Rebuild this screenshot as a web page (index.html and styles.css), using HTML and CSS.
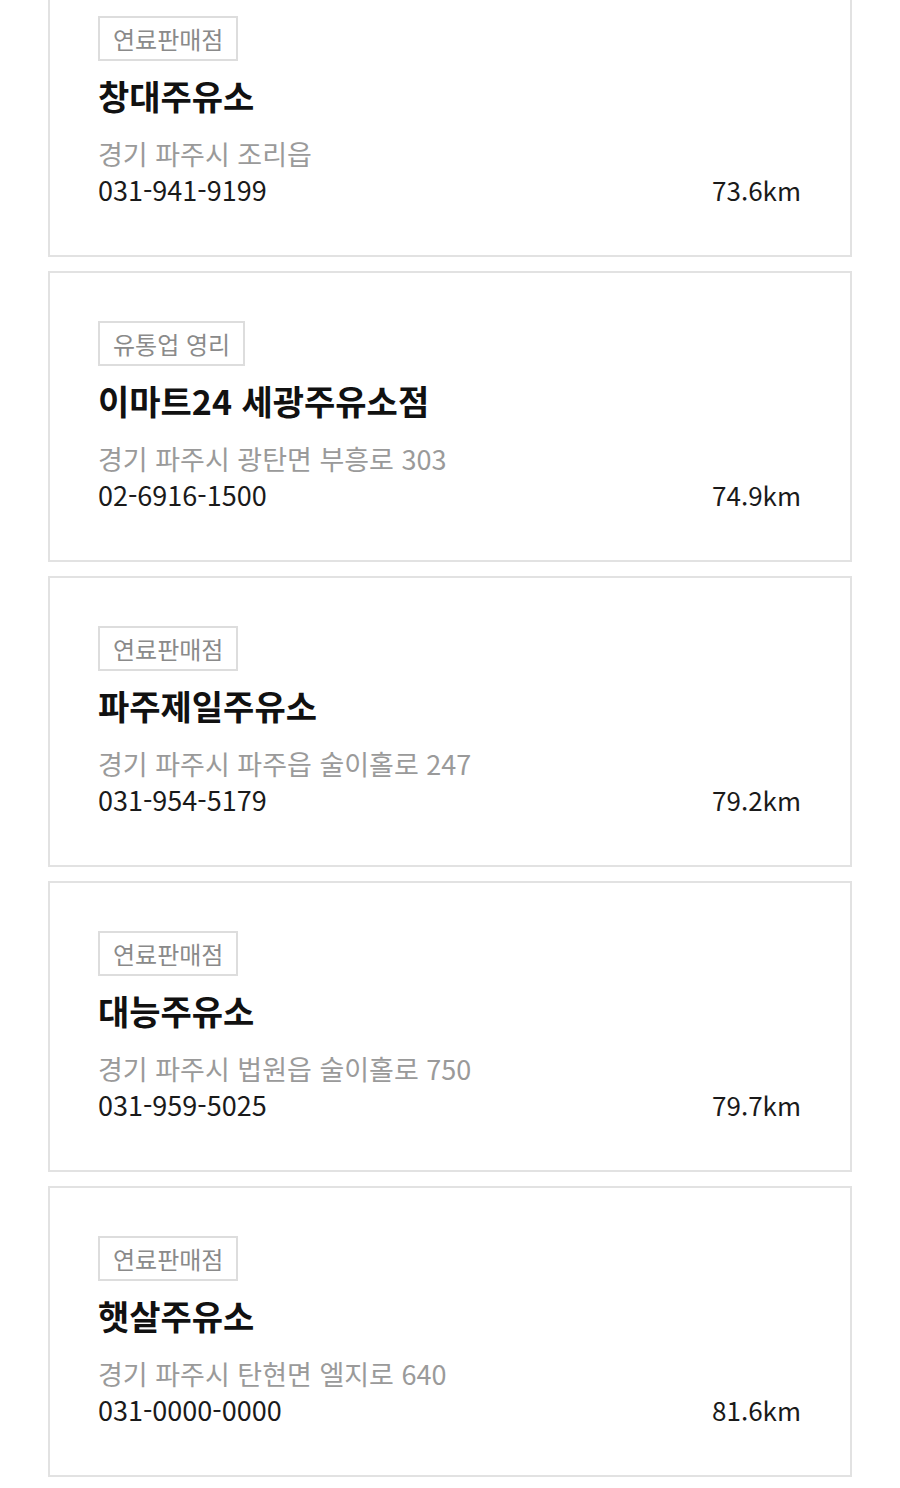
FILE: index.html
```html
<!DOCTYPE html>
<html lang="ko">
<head>
  <meta charset="UTF-8">
  <meta name="viewport" content="width=device-width, initial-scale=1.0">
  <title>주유소 목록</title>
  <link rel="stylesheet" href="styles.css">
</head>
<body>

  <div class="station-list">
    <div class="station">
      <span class="tag">연료판매점</span>
      <div class="name">창대주유소</div>
      <div class="address">경기 파주시 조리읍</div>
      <div class="bottom-row">
        <span class="phone">031-941-9199</span>
        <span class="distance">73.6km</span>
      </div>
    </div>

    <div class="station">
      <span class="tag">유통업 영리</span>
      <div class="name">이마트24 세광주유소점</div>
      <div class="address">경기 파주시 광탄면 부흥로 303</div>
      <div class="bottom-row">
        <span class="phone">02-6916-1500</span>
        <span class="distance">74.9km</span>
      </div>
    </div>

    <div class="station">
      <span class="tag">연료판매점</span>
      <div class="name">파주제일주유소</div>
      <div class="address">경기 파주시 파주읍 술이홀로 247</div>
      <div class="bottom-row">
        <span class="phone">031-954-5179</span>
        <span class="distance">79.2km</span>
      </div>
    </div>

    <div class="station">
      <span class="tag">연료판매점</span>
      <div class="name">대능주유소</div>
      <div class="address">경기 파주시 법원읍 술이홀로 750</div>
      <div class="bottom-row">
        <span class="phone">031-959-5025</span>
        <span class="distance">79.7km</span>
      </div>
    </div>

    <div class="station">
      <span class="tag">연료판매점</span>
      <div class="name">햇살주유소</div>
      <div class="address">경기 파주시 탄현면 엘지로 640</div>
      <div class="bottom-row">
        <span class="phone">031-0000-0000</span>
        <span class="distance">81.6km</span>
      </div>
    </div>
  </div>

</body>
</html>
```

FILE: styles.css
```css
body {
  margin: 0;
  background: #ffffff;
  font-family: "Noto Sans CJK KR", "Noto Sans", sans-serif;
  color: #111;
}

/* list is scrolled a bit, first card is cut at the top */
.station-list {
  display: flex;
  flex-direction: column;
  gap: 14px;
  margin: -34px 48px 0;
}

.station {
  border: 2px solid #e2e2e2;
  padding: 48px 49px 47px 48px;
}

.tag {
  display: inline-block;
  height: 41px;
  line-height: 41px;
  padding: 0 13px;
  border: 2px solid #dddddd;
  font-size: 24px;
  color: #8a8a8a;
  vertical-align: top;
}

.name {
  margin-top: 13px;
  font-size: 34px;
  line-height: 44px;
  font-weight: 700;
  color: #111;
}

.address {
  margin-top: 18px;
  font-size: 27px;
  line-height: 36px;
  color: #9a9a9a;
}

.bottom-row {
  display: flex;
  justify-content: space-between;
  font-size: 27px;
  line-height: 36px;
  color: #1a1a1a;
}

.distance {
  font-size: 26px;
}
```
